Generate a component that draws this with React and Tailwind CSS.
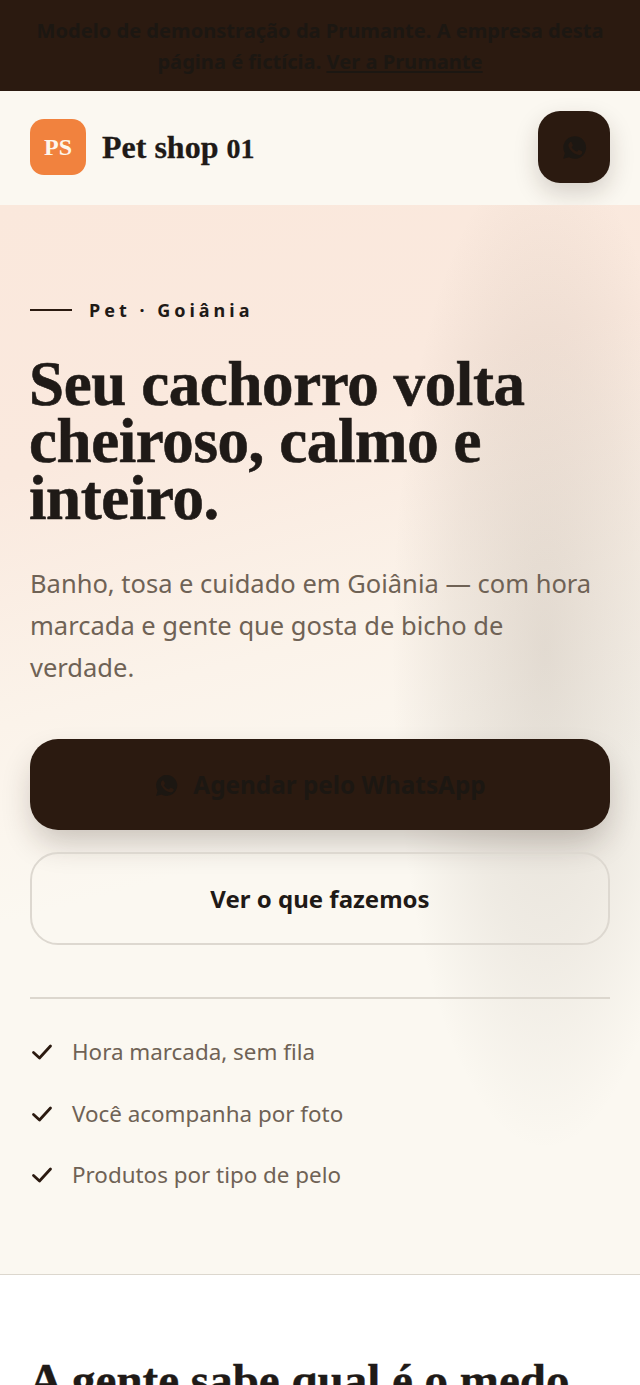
import React from "react";

const sans = "font-['Noto_Sans','Open_Sans',sans-serif]";
const serif = "font-['Liberation_Serif',serif]";

function Whats({ size }) {
  return (
    <svg width={size} height={size} viewBox="0 0 24 24" className="shrink-0">
      <path fill="#1c1712" d="M12 2a10 10 0 0 0-8.6 15L2 22l5.2-1.4A10 10 0 1 0 12 2z" />
      <path fill="#2b1a10" d="M8.6 7.2c-.3 0-.7.1-1 .5-.3.4-1 1-1 2.5s1.1 2.9 1.2 3.1c.2.2 2.1 3.3 5.2 4.5 2.6 1 3.1.8 3.7.8.6-.1 1.8-.7 2-1.5.2-.7.2-1.3.2-1.5-.1-.1-.3-.2-.6-.4l-2.1-1c-.3-.1-.5-.2-.7.1l-1 1.2c-.2.2-.4.3-.7.1-.3-.2-1.3-.5-2.5-1.5-.9-.8-1.5-1.8-1.7-2.1-.2-.3 0-.5.1-.6l.5-.5.3-.5c.1-.2.1-.4 0-.5l-1-2.3c-.2-.6-.5-.5-.7-.5z" />
    </svg>
  );
}

function Check() {
  return (
    <svg width="24" height="24" viewBox="0 0 24 24" fill="none" stroke="#2b1a10" strokeWidth="2.8" strokeLinecap="round" strokeLinejoin="round" className="shrink-0">
      <path d="M3.5 12.5 9.5 18 20.5 6" />
    </svg>
  );
}

export default function App() {
  return (
    <div className={`${sans} bg-white text-[#1f1a17] h-[1385px] overflow-hidden`}>
      <div className="bg-[#2b1a10] h-[91px] px-[30px] pt-[15px] text-center text-[20.1px] leading-[31px] font-bold text-[#1c1712]">
        Modelo de demonstração da Prumante. A empresa desta página é fictícia. <span className="underline">Ver a Prumante</span>
      </div>

      <header className="bg-[#fbf8f1] h-[114px] px-[30px] pb-[2px] flex items-center justify-between">
        <div className="flex items-center gap-[16px]">
          <div className={`${serif} w-[56px] h-[56px] rounded-[14px] bg-[#f1823e] flex items-center justify-center text-[#fdf6ec] font-bold text-[24px]`}>PS</div>
          <div className={`${serif} font-bold text-[32px] text-[#1f1a17] [-webkit-text-stroke:0.3px_#1f1a17]`}>Pet shop <span className="text-[28px]">01</span></div>
        </div>
        <div className="w-[72px] h-[72px] rounded-[22px] bg-[#2b1a10] flex items-center justify-center shadow-[0_10px_24px_rgba(43,26,16,0.18)]">
          <Whats size={27} />
        </div>
      </header>

      <section className="relative h-[1070px] bg-[#fbf8f1] border-b border-[#dcd7ce] overflow-hidden">
        <div className="absolute inset-0 bg-[linear-gradient(165deg,#fae8dc_0%,#fae9de_22%,#fbf3ea_42%,#fbf8f1_58%)]" />
        <div className="absolute left-[390px] top-[-60px] w-[310px] h-[1010px] rounded-full bg-[radial-gradient(ellipse_at_center,rgba(120,105,90,0.19)_0%,rgba(120,105,90,0.09)_42%,rgba(120,105,90,0)_70%)]" />
        <div className="relative px-[30px] pt-[93px]">
          <div className="flex items-center gap-[17px]">
            <span className="w-[42px] h-[2px] bg-[#2b1a10]" />
            <span className="text-[18px] leading-[24px] font-bold tracking-[4px]">Pet · Goiânia</span>
          </div>
          <h1 className={`${serif} mt-[34px] -ml-[1px] text-[63px] leading-[57px] font-bold tracking-[-0.4px] [-webkit-text-stroke:0.6px_#1f1a17]`}>Seu cachorro volta cheiroso, calmo e inteiro.</h1>
          <p className="mt-[35px] text-[25.5px] leading-[42px] text-[#6f6255]">Banho, tosa e cuidado em Goiânia — com hora marcada e gente que gosta de bicho de verdade.</p>
          <div className="mt-[51px] h-[91px] pt-[1px] rounded-[28px] bg-[#2b1a10] flex items-center justify-center gap-[14px] text-[24.3px] font-bold text-[#1c1712] shadow-[0_16px_32px_-4px_rgba(43,26,16,0.24)]">
            <Whats size={25} />
            Agendar pelo WhatsApp
          </div>
          <div className="mt-[22px] h-[93px] rounded-[28px] border-2 border-[#ddd8d0] flex items-center justify-center text-[24px] font-bold">
            Ver o que fazemos
          </div>
          <div className="mt-[52px] border-t-2 border-[#dcd7ce] pt-[33px] flex flex-col gap-[21.5px] text-[22.4px] leading-[40px] text-[#6f6255]">
            {["Hora marcada, sem fila", "Você acompanha por foto", "Produtos por tipo de pelo"].map((t) => (
              <div key={t} className="flex items-center gap-[18px]">
                <Check />
                {t}
              </div>
            ))}
          </div>
        </div>
      </section>

      <section className="bg-white px-[30px] pt-[78px]">
        <h2 className={`${serif} -ml-[1px] text-[47px] leading-[54px] font-bold [-webkit-text-stroke:0.4px_#1f1a17] whitespace-nowrap`}>A gente sabe qual é o medo</h2>
      </section>
    </div>
  );
}
